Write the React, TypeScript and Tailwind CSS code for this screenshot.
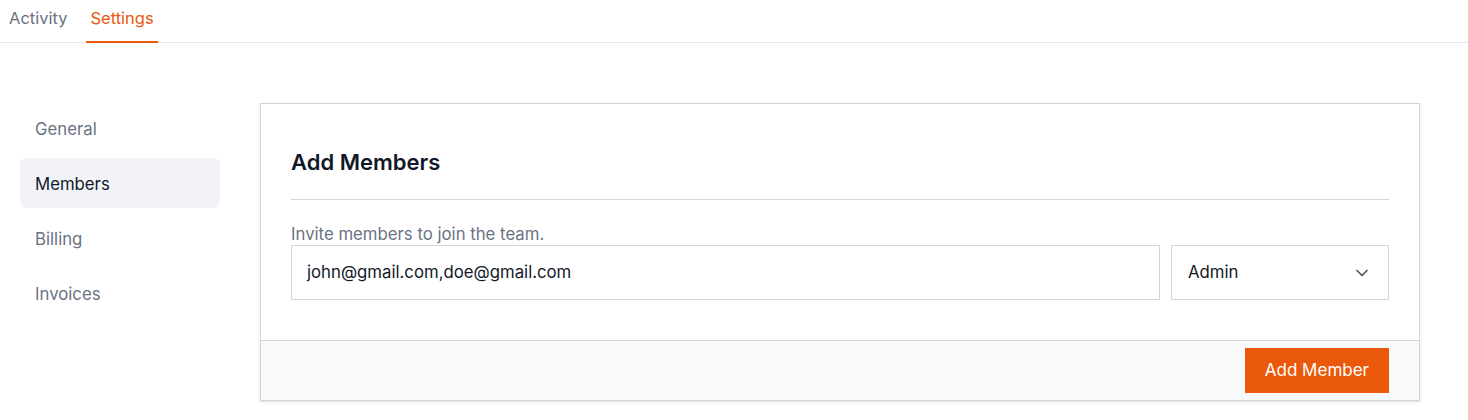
import { ChevronDown } from "lucide-react";

const NAV = ["General", "Members", "Billing", "Invoices"];

export default function App() {
  return (
    <div className="min-h-[420px] bg-white font-['Inter',sans-serif] text-[#111827]">
      {/* top tabs */}
      <div className="flex border-b border-gray-200 h-[43px] px-[4px]">
        <div className="px-[5px] pt-[6px] text-[16.5px] text-gray-500">Activity</div>
        <div className="ml-[14px] px-[4px] pt-[6px] text-[16.5px] text-[#ea580c] border-b-2 border-[#ea580c] -mb-px">Settings</div>
      </div>

      <div className="flex gap-[40px] pl-[20px] pr-[48px] pt-[60px]">
        {/* side nav */}
        <nav className="w-[200px] shrink-0 flex flex-col gap-[5px]">
          {NAV.map((n) => (
            <div
              key={n}
              className={`h-[50px] flex items-center px-[15px] pt-[4px] rounded-md text-[16.75px] ${
                n === "Members" ? "bg-[#f1f3f8] text-[#111827]" : "text-gray-500"
              }`}
            >
              {n}
            </div>
          ))}
        </nav>

        {/* card */}
        <div className="flex-1 border border-gray-300 shadow-sm bg-white">
          <div className="px-[30px] pt-[47px] pb-[40px]">
            <h2 className="text-[22px] font-semibold leading-none">Add Members</h2>
            <div className="mt-[26px] border-t border-gray-300" />
            <p className="mt-[24px] text-[16.75px] text-gray-500 leading-5">Invite members to join the team.</p>
            <div className="mt-[1px] flex gap-[11px]">
              <div className="flex-1 h-[55px] border border-gray-300 flex items-center px-[15px] text-[16.75px]">
                john@gmail.com,doe@gmail.com
              </div>
              <div className="w-[218px] h-[55px] border border-gray-300 flex items-center justify-between pl-[16px] pr-[16px] text-[16.75px]">
                <span>Admin</span>
                <ChevronDown className="w-[20px] h-[20px] text-gray-600" strokeWidth={2} />
              </div>
            </div>
          </div>
          <div className="bg-[#f8f9fb] border-t border-gray-300 h-[60px] flex items-center justify-end px-[30px]">
            <button className="bg-[#ea580c] text-white text-[17px] h-[45px] px-[20px]">Add Member</button>
          </div>
        </div>
      </div>
    </div>
  );
}
